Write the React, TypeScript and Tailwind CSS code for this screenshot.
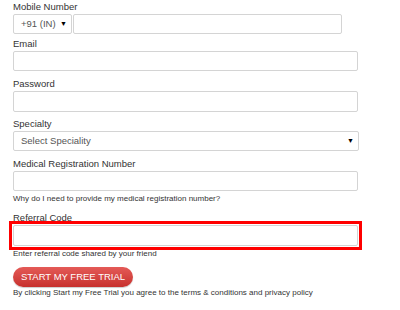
import React from "react";

function Label({ text, className = "" }: { text: string; className?: string }) {
  return <div className={`h-[14px] text-[9.5px] leading-[14px] text-[#333] ${className}`}>{text}</div>;
}

function TextBox({ width = "w-[345px]", height = "h-[20px]" }: { width?: string; height?: string }) {
  return <div className={`${width} ${height} rounded-[2px] border border-[#d4d4d4] bg-white`} />;
}

function SelectBox({ value, width }: { value: string; width: string }) {
  return (
    <div className={`${width} flex h-[20px] items-center justify-between rounded-[2px] border border-[#d4d4d4] bg-white pl-[7px] pr-[4px] text-[9.5px] text-[#555]`}>
      <span>{value}</span>
      <span className="text-[7px] text-black">▼</span>
    </div>
  );
}

export default function App() {
  return (
    <div className="h-[310px] w-[400px] overflow-hidden bg-white pl-[13px] font-['Liberation_Sans',Arial,sans-serif] text-[#333]">
      <Label text="Mobile Number" />
      <div className="flex gap-[1px]">
        <SelectBox value="+91 (IN)" width="w-[59px]" />
        <TextBox width="w-[269px]" />
      </div>

      <Label text="Email" className="mt-[3px]" />
      <TextBox />

      <Label text="Password" className="mt-[6px]" />
      <TextBox height="h-[21px]" />

      <Label text="Specialty" className="mt-[5px]" />
      <SelectBox value="Select Speciality" width="w-[346px]" />

      <Label text="Medical Registration Number" className="mt-[6px]" />
      <TextBox />
      <p className="mt-[2px] text-[8px] leading-[12px] text-[#333]">
        Why do I need to provide my medical registration number?
      </p>

      <Label text="Referral Code" className="mt-[6px]" />
      <div className="relative w-[345px]">
        <TextBox height="h-[21px]" />
        <div className="pointer-events-none absolute -inset-[4px] border-[3px] border-[#f00]" />
      </div>
      <p className="mt-[2px] text-[8px] leading-[12px] text-[#333]">Enter referral code shared by your friend</p>

      <button className="mt-[7px] flex h-[20px] w-[120px] items-center justify-center whitespace-nowrap rounded-full bg-gradient-to-b from-[#e45a57] to-[#c7302d] text-[9.5px] text-white shadow-[0_1px_1px_rgba(0,0,0,0.2)]">
        START MY FREE TRIAL
      </button>
      <p className="text-[8px] leading-[12px] text-[#333]">
        By clicking Start my Free Trial you agree to the terms &amp; conditions and privacy policy
      </p>
    </div>
  );
}
